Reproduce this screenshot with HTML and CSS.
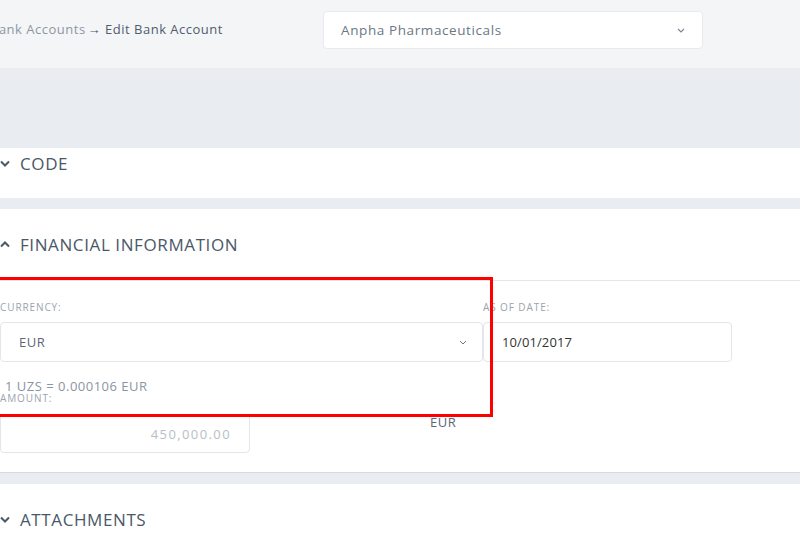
FILE: index.html
```html
<!DOCTYPE html>
<html lang="en">
 <head>
  <meta charset="utf-8"/>
  <title>Edit Bank Account</title>
  <link rel="stylesheet" href="styles.css">
 </head>
 <body>
	<header class="topbar">
		<div class="crumbs">
			<span class="crumb-link">Bank Accounts</span><span class="crumb-arrow">&rarr;</span><span class="crumb-current">Edit Bank Account</span>
		</div>
		<div class="company-select">
			<span>Anpha Pharmaceuticals</span>
			<svg class="chev-sm" width="8" height="5" viewBox="0 0 8 5"><path d="M1 1l3 3 3-3" fill="none" stroke="#7b8794" stroke-width="1.2"/></svg>
		</div>
	</header>
	<div class="band"></div>

	<section class="panel panel-code">
		<h2 class="panel-title">
			<svg class="chev" width="10" height="7" viewBox="0 0 10 7"><path d="M1 1.5l4 4 4-4" fill="none" stroke="#4a5868" stroke-width="2"/></svg>
			CODE
		</h2>
	</section>

	<section class="panel panel-fin">
		<h2 class="panel-title panel-title-line">
			<svg class="chev" width="10" height="7" viewBox="0 0 10 7"><path d="M1 5.5l4-4 4 4" fill="none" stroke="#4a5868" stroke-width="2"/></svg>
			FINANCIAL INFORMATION
		</h2>
		<div class="fields">
			<div class="row">
				<div class="field field-currency">
					<label>Currency:</label>
					<div class="input select">
						<span>EUR</span>
						<svg width="8" height="5" viewBox="0 0 8 5"><path d="M1 1l3 3 3-3" fill="none" stroke="#6b7785" stroke-width="1"/></svg>
					</div>
				</div>
				<div class="field field-date">
					<label>As of date:</label>
					<div class="input date">10/01/2017</div>
				</div>
			</div>
			<div class="rate">1 UZS = 0.000106 EUR</div>
			<div class="row row-amount">
				<div class="field field-amount">
					<label>Amount:</label>
					<div class="input amount">450,000.00</div>
				</div>
				<div class="amount-cur">EUR</div>
			</div>
		</div>
		<div class="highlight"></div>
	</section>

	<section class="panel panel-attach">
		<h2 class="panel-title">
			<svg class="chev" width="10" height="7" viewBox="0 0 10 7"><path d="M1 1.5l4 4 4-4" fill="none" stroke="#4a5868" stroke-width="2"/></svg>
			ATTACHMENTS
		</h2>
	</section>
 </body>
</html>
```

FILE: styles.css
```css
*{margin:0; padding:0; box-sizing:border-box;}
html,body{ width:800px; height:553px; overflow:hidden;}
body{ background-color:#e9ecf0; font-family:"Open Sans", "Liberation Sans", sans-serif; color:#4a5868; position:relative;}

/* top bar */
.topbar{ height:68px; background-color:#f4f5f7; display:flex; align-items:center; }
	.crumbs{ margin-left:-10px; width:333px; font-size:13px; letter-spacing:0.5px; margin-top:-10px; white-space:nowrap;}
		.crumb-link{ color:#8d97a3;}
		.crumb-arrow{ color:#4a5868; font-weight:600; margin:0 4px 0 2px;}
		.crumb-current{ color:#4f5d6d;}
	.company-select{ width:380px; height:38px; margin-top:-8px; background:#fff; border:1px solid #e8eaee; border-radius:4px;
		display:flex; align-items:center; justify-content:space-between; padding:0 17px 0 17px; font-size:13.5px; letter-spacing:0.6px; color:#6b7785;}

.band{ height:80px; }

/* panels */
.panel{ background:#fff; }
.panel-title{ display:flex; align-items:center; gap:10px; font-weight:400; font-size:17px; letter-spacing:0.6px; color:#4a5868; height:72px;}
	.chev{ flex:none;}
.panel-code{ height:50px; margin-bottom:11px;}
	.panel-code .panel-title{ height:31px; }
.panel-title-line{ border-bottom:1px solid #e3e6ea;}
.panel-fin{ position:relative; height:264px; border-bottom:1px solid #d6dadf; margin-bottom:11px;}

.fields{ padding-top:20px;}
	.row{ display:flex; }
	.field label{ display:block; font-size:10px; letter-spacing:0.9px; text-transform:uppercase; color:#9aa3ae; height:21px; line-height:12px;}
	.input{ height:40px; background:#fff; border:1px solid #e3e6ea; border-radius:4px; display:flex; align-items:center; font-size:13px; letter-spacing:0.5px;}
	.field-currency{ width:483px;}
		.select{ justify-content:space-between; padding:0 15px 0 18px; color:#5a6775;}
	.field-date{ width:249px;}
		.date{ padding-left:18px; color:#333; letter-spacing:0.1px;}
	.rate{ font-size:13px; letter-spacing:0.5px; color:#8a95a3; padding:17px 0 0 5px; line-height:14px; height:31px;}
	.row-amount{ align-items:flex-start;}
	.field-amount{ width:250px;}
		.field-amount label{ height:21px; line-height:10px;}
		.amount{ height:39px; justify-content:flex-end; padding-right:18px; color:#b8bec6; letter-spacing:1.4px;}
	.amount-cur{ margin:20px 0 0 180px; font-size:13px; letter-spacing:0.5px; color:#5a6775;}

.highlight{ position:absolute; left:-3px; top:68px; width:496px; height:140px; border:3px solid #ff0000;}

.panel-attach{ height:80px;}
	.panel-attach .panel-title{ height:70px;}
```
